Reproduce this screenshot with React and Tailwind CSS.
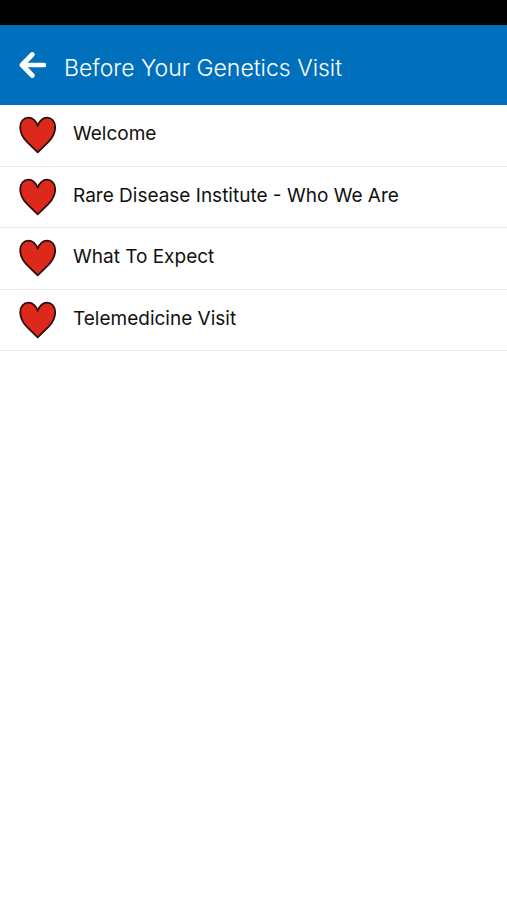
import React from 'react';

const items = [
  { label: 'Welcome', href: '#welcome' },
  { label: 'Rare Disease Institute - Who We Are', href: '#who-we-are' },
  { label: 'What To Expect', href: '#what-to-expect' },
  { label: 'Telemedicine Visit', href: '#telemedicine-visit' },
];

function BackArrow() {
  return (
    <svg viewBox="0 0 28 28" className="w-7 h-7" fill="none" stroke="currentColor" strokeLinecap="round" aria-hidden="true">
      <path d="M5 14H26" strokeWidth="4.4" />
      <path d="M14.3 3.6L4 14L14.3 24.4" strokeWidth="5" strokeLinejoin="round" />
    </svg>
  );
}

function Heart() {
  return (
    <svg viewBox="0 0 38 38" className="w-[38px] h-[38px] shrink-0" aria-hidden="true">
      <path
        d="M18.7 36.4L8.2 26.2C3.4 21.2 1.2 16.4 1.2 11.2C1.2 5.4 4.8 1.7 9.4 1.7C13.6 1.7 16.8 4.8 18.7 9.8C20.6 4.8 23.8 1.7 28 1.7C32.6 1.7 36.2 5.4 36.2 11.2C36.2 16.4 34 21.2 29.2 26.2Z"
        fill="#dc291c"
        stroke="#2a0e0c"
        strokeWidth="1.8"
        strokeLinejoin="round"
      />
    </svg>
  );
}

export default function App() {
  return (
    <div className="min-h-screen bg-white font-['Inter',sans-serif]">
      {/* Status bar */}
      <div className="h-[25px] bg-black" />

      <header className="flex items-center h-20 pl-[18px] pr-4 gap-[18px] bg-[#0070bd] text-white">
        <button type="button" aria-label="Back" className="shrink-0">
          <BackArrow />
        </button>
        <h1 className="pt-[6px] text-[23px] leading-8 font-light">Before Your Genetics Visit</h1>
      </header>

      <ul className="grid grid-rows-4 h-[246px]">
        {items.map((item) => (
          <li key={item.href} className="border-b border-[#ebebeb]">
            <a href={item.href} className="flex items-center h-full pl-[19px] pr-4 gap-4 text-[#111111]">
              <Heart />
              <span className="pb-[2px] text-[19px] leading-6">{item.label}</span>
            </a>
          </li>
        ))}
      </ul>
    </div>
  );
}
